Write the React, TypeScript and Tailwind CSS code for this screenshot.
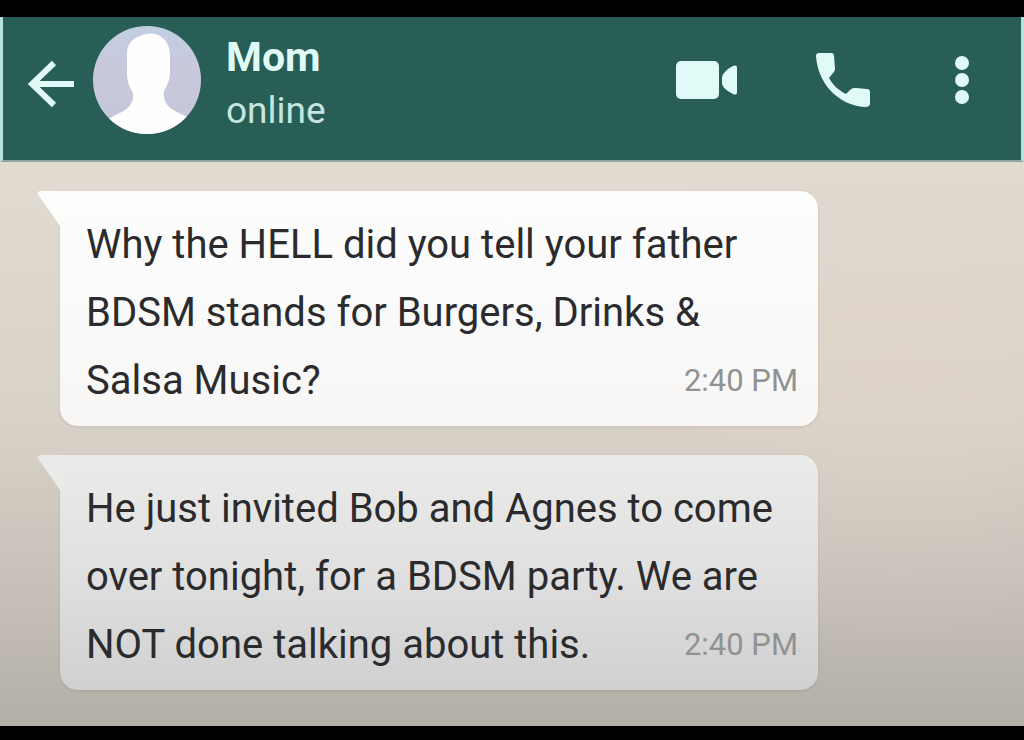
type Message = {
  id: number;
  text: string;
  time: string;
  bubble: string;
  tail: string;
};

const messages: Message[] = [
  {
    id: 1,
    text: "Why the HELL did you tell your father BDSM stands for Burgers, Drinks & Salsa Music?",
    time: "2:40 PM",
    bubble: "bg-linear-to-b from-[#fdfdfc] via-[#fafafb] to-[#f8f7f5]",
    tail: "text-[#fdfdfc]",
  },
  {
    id: 2,
    text: "He just invited Bob and Agnes to come over tonight, for a BDSM party. We are NOT done talking about this.",
    time: "2:40 PM",
    bubble: "bg-linear-to-b from-[#ebebea] via-[#e0e0e0] to-[#d0d0d0]",
    tail: "text-[#eaeae9]",
  },
];

function Avatar() {
  return (
    <svg viewBox="0 0 108 108" className="size-[108px] shrink-0" role="img" aria-label="Mom">
      <defs>
        <clipPath id="avatar-clip">
          <circle cx="54" cy="54" r="54" />
        </clipPath>
        <linearGradient id="avatar-bg" x1="0" y1="0" x2="0" y2="1">
          <stop offset="0" stopColor="#bfcfe2" />
          <stop offset="0.3" stopColor="#c9c9de" />
          <stop offset="1" stopColor="#c5c6d8" />
        </linearGradient>
      </defs>
      <g clipPath="url(#avatar-clip)">
        <rect width="108" height="108" fill="url(#avatar-bg)" />
        <path
          d="M55 8C44 9 35 15 34 25V46C34 55 36 61 40 67C41 75 37 82 29 86C22 89 19 91 14 94V108H96V92C91 89 88 88 82 85C73 80 70 74 71 65C75 58 77 53 77 46V27C76 18 72 13 67 10C63 8 59 7 55 8Z"
          fill="#fefeff"
        />
      </g>
    </svg>
  );
}

function Header() {
  return (
    <header className="flex h-[145px] items-start border-x-[3px] border-b-2 border-x-[#b9e2dc] border-b-[#8fa9a2] bg-[#295e57] pt-[9px] pr-[51px] pl-[25px] text-[#dffaf7]">
      <div className="flex h-[108px] min-w-0 flex-1 items-center">
        <button type="button" aria-label="Back" className="mr-[17px] shrink-0">
          <svg viewBox="0 0 48 60" className="h-[60px] w-12" fill="none" stroke="currentColor" strokeWidth="6">
            <path d="M46 34H5M26 13L4 34L26 55" />
          </svg>
        </button>
        <Avatar />
        <div className="ml-[25px] min-w-0 flex-1 pt-2">
          <h1 className="text-[41px] leading-[54px] font-bold">Mom</h1>
          <p className="text-[37px] leading-[54px] text-[#c5e6e0]">online</p>
        </div>
        <nav className="flex items-center gap-[78px]">
          <button type="button" aria-label="Video call">
            <svg viewBox="0 0 62 38" className="h-[38px] w-[62px]" fill="currentColor">
              <rect y="0" width="43" height="38" rx="5" />
              <path d="M46 17C46 13 51 8 57 5C59 4 61 4 61 7V31C61 34 59 34 57 33C51 30 46 26 46 22Z" />
            </svg>
          </button>
          <button type="button" aria-label="Voice call">
            <svg viewBox="0 0 60 54" className="h-[54px] w-[60px]" fill="currentColor">
              <path d="M3 0H15C17 0 18 1 18 3L19 15C19 18 18 19 17 20L13 25C17 32 22 37 30 41L34 37C36 35 38 35 40 35L51 36C53 36 54 37 54 39V50C54 53 52 54 49 54C22 52 2 31 0 3C0 1 1 0 3 0Z" />
            </svg>
          </button>
          <button type="button" aria-label="More options">
            <svg viewBox="0 0 16 50" className="h-[50px] w-4" fill="currentColor">
              <circle cx="8" cy="8" r="7" />
              <circle cx="8" cy="25" r="7" />
              <circle cx="8" cy="42" r="7" />
            </svg>
          </button>
        </nav>
      </div>
    </header>
  );
}

function Bubble({ message }: { message: Message }) {
  return (
    <li
      className={`relative max-w-[758px] rounded-[18px] rounded-tl-none pt-5 pr-5 pb-[11px] pl-[26px] shadow-[0_1px_3px_rgba(90,80,70,0.15)] ${message.bubble}`}
    >
      <svg
        viewBox="0 0 24 36"
        className={`absolute top-0 -left-[23px] h-9 w-6 ${message.tail}`}
        fill="currentColor"
        aria-hidden
      >
        <path d="M24 0H4C0 0 0 3 2 5L23 35H24Z" />
      </svg>
      <p className="flow-root text-[40px] leading-[68px] text-[#2b2b2d]">
        {message.text}
        <time className="float-right text-[31px] text-[#929293]">{message.time}</time>
      </p>
    </li>
  );
}

export default function App() {
  return (
    <div className="flex min-h-screen flex-col border-t-[17px] border-b-[15px] border-black font-['Roboto',sans-serif]">
      <Header />
      <main className="flex-1 bg-[radial-gradient(circle_at_88%_35%,#e1d4ca80,transparent_30%),linear-gradient(to_bottom,#e2dbd2,#d9d2c8_45%,#c9c2ba_72%,#b3afa6)] pt-[29px] pr-6 pb-9 pl-[60px]">
        <ul className="flex flex-col gap-[29px]">
          {messages.map((message) => (
            <Bubble key={message.id} message={message} />
          ))}
        </ul>
      </main>
    </div>
  );
}
